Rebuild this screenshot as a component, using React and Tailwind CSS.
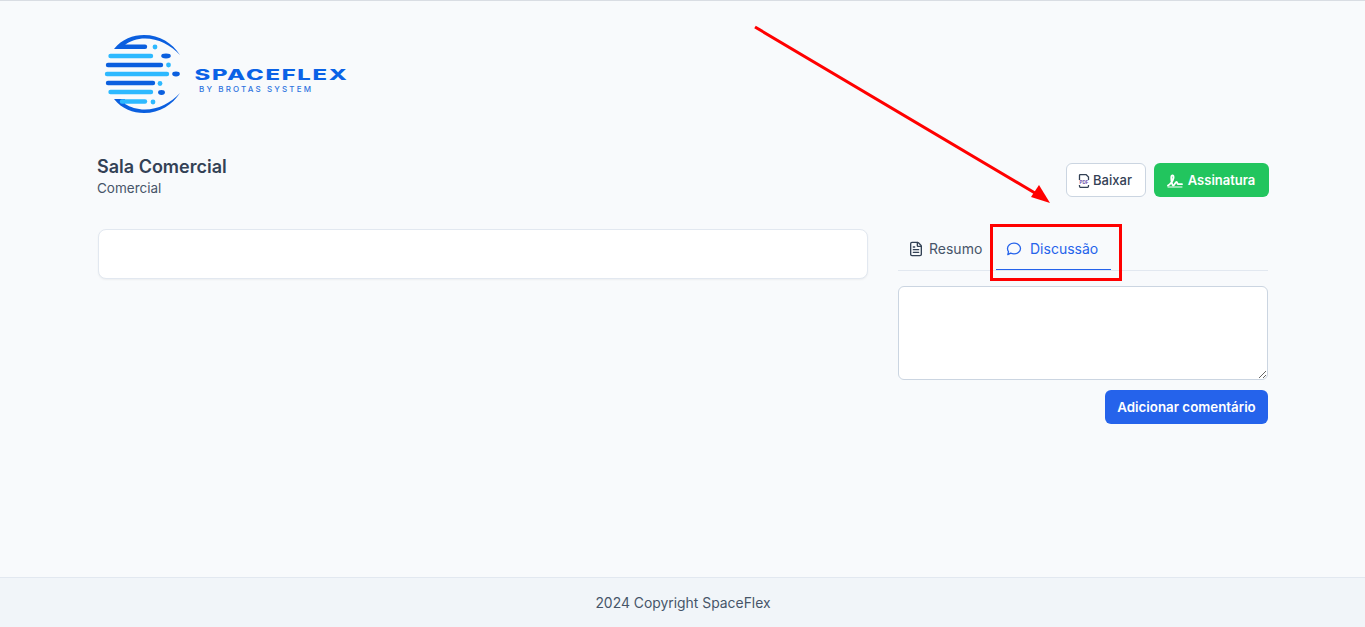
import { FileText } from "lucide-react";

function Logo() {
  const bars = [
    { y: 46.7, x1: 122, x2: 145, color: "#0b5fdf" },
    { y: 56, x1: 110.5, x2: 151, color: "#2db9ff" },
    { y: 65, x1: 108, x2: 161, color: "#0b5fdf" },
    { y: 74, x1: 107, x2: 167, color: "#2db9ff" },
    { y: 83, x1: 108, x2: 153, color: "#0b5fdf" },
    { y: 92, x1: 110.5, x2: 151, color: "#2db9ff" },
    { y: 101.5, x1: 122, x2: 145, color: "#2db9ff" },
  ];
  const dots = [
    { x: 155, y: 47, rx: 2.4, color: "#2db9ff" },
    { x: 166, y: 56, rx: 4.8, color: "#0b5fdf" },
    { x: 168.5, y: 65, rx: 2.4, color: "#2db9ff" },
    { x: 176, y: 74, rx: 3.8, color: "#0b5fdf" },
    { x: 160, y: 83.5, rx: 2.4, color: "#2db9ff" },
    { x: 161.5, y: 92.5, rx: 3.4, color: "#0b5fdf" },
    { x: 153, y: 102, rx: 2.4, color: "#2db9ff" },
  ];
  return (
    <svg width="260" height="100" viewBox="97 25 260 100" className="block">
      <path d="M114 49 C122 39 133 35 144 35 C160 35 172 43 180 55 C171 45 158 38.500 145 38.500 C137 38.500 130 41 125 45 L125 49 Z" fill="#0b5fdf" />
      <path d="M114 99 C122 109 133 113 144 113 C160 113 172 105 180 93 C171 103 158 109.500 145 109.500 C137 109.500 130 107 125 104 L125 99 Z" fill="#0b5fdf" />
      {bars.map((b) => (
        <line key={b.y} x1={b.x1} x2={b.x2} y1={b.y} y2={b.y} stroke={b.color} strokeWidth="4.400" strokeLinecap="round" />
      ))}
      {dots.map((d) => (
        <ellipse key={d.x} cx={d.x} cy={d.y} rx={d.rx} ry="2.400" fill={d.color} />
      ))}
      <text x="194.500" y="79.500" textLength="154" lengthAdjust="spacingAndGlyphs" letterSpacing="1" fill="#0a62e6" fontFamily="Inter, sans-serif" fontWeight="800" fontSize="14">SPACEFLEX</text>
      <text x="199" y="92" textLength="112" lengthAdjust="spacing" fill="#2f74e0" fontFamily="Inter, sans-serif" fontWeight="500" fontSize="8">BY BROTAS SYSTEM</text>
    </svg>
  );
}

function PdfIcon() {
  return (
    <svg width="12" height="14" viewBox="0 0 12 14" fill="none" stroke="#334155" strokeWidth="1.300">
      <path d="M1.500 6V1.500a1 1 0 0 1 1-1H8L10.500 3v3" />
      <path d="M1.500 11v1a1.500 1.500 0 0 0 1.500 1.500h6a1.500 1.500 0 0 0 1.500-1.500v-1" />
      <text x="6" y="10" textAnchor="middle" fontSize="4.500" fontWeight="700" fontFamily="Inter, sans-serif" fill="#6d4aa8" stroke="none">PDF</text>
    </svg>
  );
}

function SignatureIcon() {
  return (
    <svg width="16" height="14" viewBox="0 0 16 14" fill="none" stroke="#ffffff" strokeWidth="1.800" strokeLinecap="round">
      <path d="M1 11.500C3 10.500 6 7 6.500 4C7 1 4.500 0.500 4.300 3C4.100 6 5 11 6 11.500C7 12 8.500 8 9.500 8C10.500 8 10 10 11 10.200L15 10.200" />
      <path d="M1 13H15" strokeWidth="1" />
    </svg>
  );
}

function ChatIcon() {
  return (
    <svg width="16" height="14" viewBox="0 0 16 14" fill="none" stroke="#2563eb" strokeWidth="1.300" strokeLinejoin="round">
      <path d="M1.500 6.500C1.500 3.500 4.300 1.200 8 1.200C11.700 1.200 14.500 3.500 14.500 6.500C14.500 9.500 11.700 11.800 8 11.800C6.800 11.800 5.600 11.500 4.600 11.100L1.800 12.600L2.500 9.700C1.800 8.800 1.500 7.700 1.500 6.500Z" />
    </svg>
  );
}

export default function App() {
  return (
    <div className="relative flex min-h-screen flex-col border-t border-[#d9dde3] bg-[#f8fafc] font-['Inter',sans-serif] text-[#334155]">
      <main className="ml-[97px] w-[1172px] flex-1">
        <div className="mt-6">
          <Logo />
        </div>

        <div className="mt-[30px] flex items-end justify-between">
          <div>
            <h1 className="text-lg font-semibold leading-6">Sala Comercial</h1>
            <p className="text-[13.500px] leading-[18px] text-[#475569]">Comercial</p>
          </div>
          <div className="flex gap-2">
            <button className="flex h-[34px] w-20 items-center justify-center gap-[3px] rounded-md border border-[#cbd5e1] bg-white pr-[2px] pt-px text-[13px] font-medium">
              <PdfIcon />
              Baixar
            </button>
            <button className="flex h-[34px] w-[115px] items-center justify-center gap-[5px] rounded-md bg-[#22c55e] pr-px pt-px text-[13px] font-semibold text-white">
              <SignatureIcon />
              Assinatura
            </button>
          </div>
        </div>

        <div className="mt-[32px] flex gap-[30px] px-px">
          <div className="h-[50px] w-[770px] rounded-lg border border-[#e2e8f0] bg-white shadow-xs" />
          <div className="w-[370px]">
            <div className="flex h-[42px] border-b border-[#e2e8f0]">
              <button className="flex w-[98px] items-center gap-[5px] pb-[2px] pl-[10px] text-sm text-[#475569]">
                <FileText className="h-4 w-4 text-[#334155]" />
                Resumo
              </button>
              <button className="flex h-[41px] w-[115px] items-center gap-2 border-b border-[#2563eb] pb-px pl-[10px] text-sm text-[#2563eb]">
                <ChatIcon />
                Discussão
              </button>
            </div>
            <textarea className="mt-[15px] block h-[94px] w-full rounded-md border border-[#cbd5e1] bg-white" />
            <div className="mt-[10px] flex justify-end">
              <button className="h-[34px] w-[163px] rounded-md bg-[#2563eb] pt-px text-[13.330px] font-semibold text-white">
                Adicionar comentário
              </button>
            </div>
          </div>
        </div>
      </main>

      <footer className="flex h-[50px] items-center justify-center border-t border-[#e2e8f0] bg-[#f1f5f9] pl-px pt-px text-[13.900px] text-[#475569]">
        2024 Copyright SpaceFlex
      </footer>

      {/* annotations drawn over the screenshot */}
      <div className="absolute left-[990px] top-[223px] h-[57px] w-[132px] border-[3px] border-[#ff0000]" />
      <svg className="absolute left-0 top-0" width="1365" height="300" viewBox="0 0 1365 300">
        <line x1="755" y1="26" x2="1040" y2="195" stroke="#ff0000" strokeWidth="3" />
        <polygon points="1050,202 1031,196 1039,184" fill="#ff0000" />
      </svg>
    </div>
  );
}
